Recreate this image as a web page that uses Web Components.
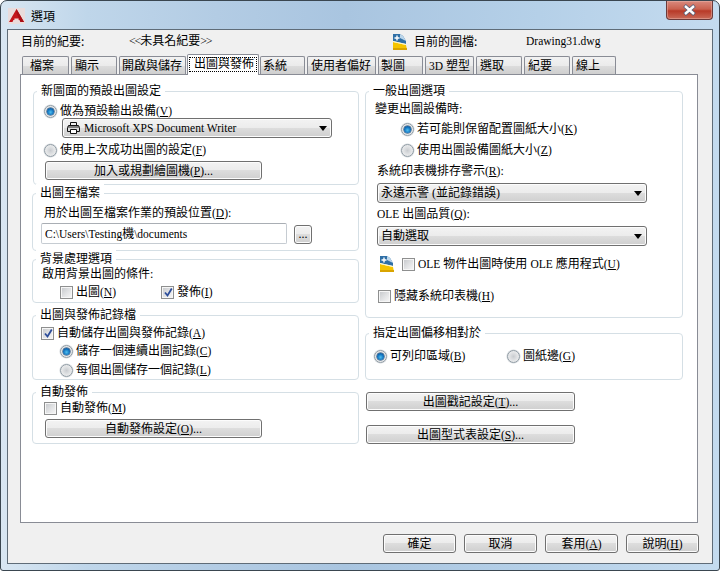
<!DOCTYPE html>
<html lang="zh-Hant"><head><meta charset="utf-8"><title>選項</title>
<style>
html,body{margin:0;padding:0;background:#fff}
body{font:12px/14px "Liberation Serif","Noto Sans CJK TC",serif;color:#000;width:720px;height:571px;overflow:hidden}
</style></head><body>
<x-dialog>
  <span slot="title">選項</span>
  <x-info slot="info"></x-info>
  <x-tab style="width:47px;margin-left:2px" pad="7">檔案</x-tab>
  <x-tab style="width:46px;margin-left:2px" pad="3">顯示</x-tab>
  <x-tab style="width:67px;margin-left:2px" pad="2">開啟與儲存</x-tab>
  <x-tab style="width:72px;margin-left:1px" pad="5" active>出圖與發佈</x-tab>
  <x-tab style="width:45px;margin-left:1px" pad="2">系統</x-tab>
  <x-tab style="width:69px;margin-left:2px" pad="3">使用者偏好</x-tab>
  <x-tab style="width:45px;margin-left:2px" pad="2">製圖</x-tab>
  <x-tab style="width:49px;margin-left:2px" pad="3"><x-l>3D</x-l> 塑型</x-tab>
  <x-tab style="width:46px;margin-left:2px" pad="3">選取</x-tab>
  <x-tab style="width:46px;margin-left:2px" pad="3">紀要</x-tab>
  <x-tab style="width:44px;margin-left:2px" pad="3">線上</x-tab>

  <x-col slot="left" style="width:327px;margin-left:11px;gap:8px">
    <x-group label="新圖面的預設出圖設定" style="height:94px;margin-left:1px">
      <x-row style="margin:12px 0 0 10px"><x-radio checked></x-radio>做為預設輸出設備<x-m>V</x-m></x-row>
      <x-row style="margin-left:28px"><x-select style="width:270px" printer><x-l>Microsoft XPS Document Writer</x-l></x-select></x-row>
      <x-row style="margin:5px 0 0 10px"><x-radio></x-radio>使用上次成功出圖的設定<x-m>F</x-m></x-row>
      <x-row style="margin:4px 0 0 11px"><x-btn style="width:217px">加入或規劃繪圖機<x-m>P</x-m>...</x-btn></x-row>
    </x-group>
    <x-group label="出圖至檔案" style="height:58px">
      <x-row style="margin:12px 0 0 11px">用於出圖至檔案作業的預設位置<x-m>D</x-m>:</x-row>
      <x-row style="margin:3px 0 0 8px"><x-field style="width:246px"><x-l>C:\Users\Testing</x-l>機<x-l>\documents</x-l></x-field><x-btn style="width:18px;margin:1px 0 0 7px">...</x-btn></x-row>
    </x-group>
    <x-group label="背景處理選項" style="height:44px;margin-bottom:4px">
      <x-row style="margin:7px 0 0 9px">啟用背景出圖的條件:</x-row>
      <x-row style="margin:4px 0 0 27px"><x-check style="--w:101px">出圖<x-m>N</x-m></x-check><x-check checked>發佈<x-m>I</x-m></x-check></x-row>
    </x-group>
    <x-group label="出圖與發佈記錄檔" style="height:65px;margin-bottom:4px">
      <x-row style="margin:10px 0 0 8px"><x-check checked>自動儲存出圖與發佈記錄<x-m>A</x-m></x-check></x-row>
      <x-row style="margin:4px 0 0 27px"><x-radio checked></x-radio>儲存一個連續出圖記錄<x-m>C</x-m></x-row>
      <x-row style="margin:5px 0 0 27px"><x-radio></x-radio>每個出圖儲存一個記錄<x-m>L</x-m></x-row>
    </x-group>
    <x-group label="自動發佈" style="height:52px">
      <x-row style="margin:8px 0 0 11px"><x-check>自動發佈<x-m>M</x-m></x-check></x-row>
      <x-row style="margin:4px 0 0 12px"><x-btn style="width:217px">自動發佈設定<x-m>O</x-m>...</x-btn></x-row>
    </x-group>
  </x-col>

  <x-col slot="right" style="width:318px;margin-left:6px">
    <x-group label="一般出圖選項" style="height:227px">
      <x-row style="margin:10px 0 0 9px">變更出圖設備時:</x-row>
      <x-row style="margin:6px 0 0 35px"><x-radio checked></x-radio>若可能則保留配置圖紙大小<x-m>K</x-m></x-row>
      <x-row style="margin:7px 0 0 35px"><x-radio></x-radio>使用出圖設備圖紙大小<x-m>Z</x-m></x-row>
      <x-row style="margin:7px 0 0 11px">系統印表機排存警示<x-m>R</x-m>:</x-row>
      <x-row style="margin:5px 0 0 11px"><x-select style="width:270px">永遠示警 (並記錄錯誤)</x-select></x-row>
      <x-row style="margin:4px 0 0 11px"><x-l>OLE</x-l>&nbsp;出圖品質<x-m>Q</x-m>:</x-row>
      <x-row style="margin:5px 0 0 11px"><x-select style="width:270px">自動選取</x-select></x-row>
      <x-row style="margin:9px 0 0 13px;height:18px"><x-dwg style="margin-right:7px"></x-dwg><x-check><x-l>OLE</x-l>&nbsp;物件出圖時使用&nbsp;<x-l>OLE</x-l>&nbsp;應用程式<x-m>U</x-m></x-check></x-row>
      <x-row style="margin:16px 0 0 12px"><x-check>隱藏系統印表機<x-m>H</x-m></x-check></x-row>
    </x-group>
    <x-group label="指定出圖偏移相對於" style="height:47px;margin-top:15px">
      <x-row style="margin:15px 0 0 8px"><x-radio checked style="--w:133px">可列印區域<x-m>B</x-m></x-radio><x-radio>圖紙邊<x-m>G</x-m></x-radio></x-row>
    </x-group>
    <x-btn style="width:209px;margin:12px 0 0 1px">出圖戳記設定<x-m>T</x-m>...</x-btn>
    <x-btn style="width:209px;margin:14px 0 0 1px">出圖型式表設定<x-m>S</x-m>...</x-btn>
  </x-col>

  <x-btn slot="foot" style="width:73px">確定</x-btn>
  <x-btn slot="foot" style="width:73px">取消</x-btn>
  <x-btn slot="foot" style="width:73px">套用<x-m>A</x-m></x-btn>
  <x-btn slot="foot" style="width:73px">說明<x-m>H</x-m></x-btn>
</x-dialog>
<script>
function def(name, html, init){
  customElements.define(name, class extends HTMLElement{
    connectedCallback(){
      if(this.shadowRoot) return;
      const s=this.attachShadow({mode:'open'});
      s.innerHTML=typeof html==='function'?html(this):html;
      if(init) init(this,s);
    }
  });
}
const DWG=`<svg width="16" height="18" viewBox="0 0 16 18" style="display:block">
<path d="M1 1h7l3 2 3 5v3L1 8z" fill="#2f6fa6"/><path d="M8 1l3 2 3 5-6-3z" fill="#bcd6ea"/>
<path d="M1 9l13 3 1 5H1z" fill="#f5c400"/><path d="M1 8l13 3v1L1 9z" fill="#fff6c0"/><path d="M1 15h14v2H1z" fill="#d9a400"/>
<path d="M5 2.5v5M2.5 5h5" stroke="#fff" stroke-width="1.4"/></svg>`;

def('x-dialog',`<style>
:host{display:flex;flex-direction:column;box-sizing:border-box;width:720px;height:571px;border:1px solid #3a4650;border-radius:7px 7px 3px 3px;
background:linear-gradient(90deg,#d8e6f2 0,#bfd6ea 12%,#b3cce4 30%,#a9c5e0 48%,#b5d0e8 75%,#c4dbef 100%);overflow:hidden}
.bar{display:flex;align-items:flex-start;height:28px;flex:none}
.logo{margin:7px 0 0 7px}
.t{margin:7px 0 0 6px;line-height:16px;font-family:"Noto Sans CJK TC",sans-serif}
.close{margin-left:auto;margin-right:6px;width:47px;height:19px;box-sizing:border-box;border:1px solid #6b3a3a;border-top:0;border-radius:0 0 4px 4px;
background:linear-gradient(#d98a7e 0,#c9614f 45%,#b83a28 55%,#c96a58 100%);display:flex;align-items:center;justify-content:center;box-shadow:inset 0 0 0 1px #e8b5ac80}
.client{flex:1;margin:0 6px 6px;border:1px solid #5f6c78;background:#f0f0f0;display:flex;flex-direction:column;min-height:0}
.info{height:24px;flex:none}
.tabs{display:flex;align-items:flex-end;height:20px;margin-left:12px;position:relative;z-index:1;flex:none}
.panel{margin:0 14px 0 12px;height:449px;box-sizing:border-box;border:1px solid #898c95;background:#fff;display:flex;padding-top:16px;align-items:flex-start;flex:none}
.foot{display:flex;justify-content:flex-end;gap:8px;margin:11px 13px 0 0}
</style>
<div class="bar">
<svg class="logo" width="17" height="16" viewBox="0 0 17 16"><rect width="17" height="16" fill="#e9dcdc"/><path d="M8.5 1L16 14H12.5L11.6 12H5.4L4.5 14H1z" fill="#c4161c"/><path d="M8.5 1L16 14H12.5L8.5 5z" fill="#a80f16"/><path d="M6.4 10.5h4.2v2H6.4z" fill="#f3d6d6"/></svg>
<span class="t"><slot name="title"></slot></span>
<div class="close"><svg width="15" height="12" viewBox="0 0 15 12"><path d="M2.5 1.5l10 9M12.5 1.5l-10 9" fill="none" stroke="#56607a" stroke-width="4"/><path d="M3 2l9 8M12 2l-9 8" fill="none" stroke="#fff" stroke-width="2.4"/></svg></div>
</div>
<div class="client">
<div class="info"><slot name="info"></slot></div>
<div class="tabs"><slot></slot></div>
<div class="panel"><slot name="left"></slot><slot name="right"></slot></div>
<div class="foot"><slot name="foot"></slot></div>
</div>`);

def('x-info',`<style>
:host{display:flex;align-items:flex-start;height:24px}
span{font-family:"Noto Sans CJK TC",sans-serif}
.a{margin:4px 0 0 13px;width:108px}.b{margin:4px 0 0 0;width:263px}.c{margin:4px 0 0 6px;width:112px}.d{margin-top:4px;font:11.5px/14px "Liberation Serif",serif}
svg{margin-top:3px}
.b{font-family:"Liberation Serif","Noto Sans CJK TC",serif}
.b i{font-style:normal;letter-spacing:-1.2px}
</style><span class="a">目前的紀要:</span><span class="b"><i>&lt;&lt;</i>未具名紀要<i>&gt;&gt;</i></span>${DWG}<span class="c">目前的圖檔:</span><span class="d">Drawing31.dwg</span>`);

def('x-tab',h=>{const a=h.hasAttribute('active');return `<style>
:host{display:block;box-sizing:border-box;height:${a?21:18}px;${a?'margin-bottom:-1px;':''}border:1px solid #898c95;border-bottom:0;
background:${a?'#fff':'linear-gradient(#f2f2f2 0,#ebebeb 50%,#dddddd 50%,#cfcfcf 100%)'};font-family:"Liberation Serif","Noto Sans CJK TC",serif;white-space:nowrap;position:relative;border-radius:2px 2px 0 0}
.i{display:block;margin:${a?'2px 1px 0':'2px 0 0'};padding-left:${h.getAttribute('pad')}px;line-height:15px;${a?'outline:1px dotted #000;outline-offset:-1px;height:15px;':''}}
</style><span class="i"><slot></slot></span>`});

def('x-col',`<style>:host{display:flex;flex-direction:column;flex:none}</style><slot></slot>`);

def('x-group',h=>`<style>
:host{display:flex;flex-direction:column;box-sizing:border-box;border:1px solid #d5dfe5;border-radius:4px;position:relative;background:#fff;flex:none}
.l{position:absolute;left:3px;top:-10px;padding:0 4px;background:#fff;line-height:16px;white-space:nowrap;font-family:"Noto Sans CJK TC",sans-serif}
</style><span class="l">${h.getAttribute('label')}</span><slot></slot>`);

def('x-row',`<style>:host{display:flex;align-items:center;min-height:14px;white-space:nowrap;flex:none}</style><slot></slot>`);

def('x-btn',`<style>
:host{display:inline-flex;align-items:center;justify-content:center;box-sizing:border-box;height:19px;border:1px solid #707070;border-radius:3px;
background:linear-gradient(#f3f3f3 0,#ececec 48%,#dddddd 50%,#cfcfcf 100%);box-shadow:inset 0 0 0 1px #fcfcfc;white-space:nowrap;flex:none}
</style><slot></slot>`);

def('x-select',h=>`<style>
:host{display:inline-flex;align-items:center;box-sizing:border-box;height:20px;border:1px solid #707070;border-radius:3px;padding-left:3px;position:relative;
background:linear-gradient(#f3f3f3 0,#ececec 48%,#dddddd 50%,#cfcfcf 100%);box-shadow:inset 0 0 0 1px #fcfcfc;white-space:nowrap;flex:none}
.p{margin:0 4px 0 1px;display:block}
.a{position:absolute;right:3px;top:6px;width:0;height:0;border:4px solid transparent;border-top:5px solid #000;border-bottom:0;margin-top:1px;margin-right:1px}
</style>${h.hasAttribute('printer')?`<svg class="p" width="13" height="12" viewBox="0 0 13 12"><path d="M3.5 3.5V.5h6v3M3.5 9.5h-3v-4l1-2h10l1 2v4h-3" fill="none" stroke="#111"/><path d="M3.5 7.5h6v4h-6z" fill="#fff" stroke="#111"/><path d="M1 5h11" stroke="#111"/></svg>`:''}<slot></slot><span class="a"></span>`);

def('x-radio',h=>{const c=h.hasAttribute('checked');return `<style>
:host{display:inline-flex;align-items:center;flex:none;width:var(--w,auto)}
.o{width:13px;height:13px;margin-right:3px;box-sizing:border-box;border:1px solid #8e9aa3;border-radius:50%;flex:none;display:flex;align-items:center;justify-content:center;
background:radial-gradient(circle at 50% 50%,#c9ccd0 0,#dfe1e3 45%,#f7f7f7 100%);box-shadow:0 0 0 .5px #d4d8dc}
.d{width:7px;height:7px;border-radius:50%;background:radial-gradient(circle at 50% 60%,#4fc0f0 0,#1070bc 55%,#0c3f78 100%);box-shadow:0 0 0 .5px #0f3e6d}
</style><span class="o">${c?'<span class="d"></span>':''}</span><slot></slot>`});

def('x-check',h=>{const c=h.hasAttribute('checked');return `<style>
:host{display:inline-flex;align-items:center;flex:none;width:var(--w,auto)}
.o{width:13px;height:13px;margin-right:3px;box-sizing:border-box;border:1px solid #8e8f8f;flex:none;position:relative;background:#f6f6f6}
.o::before{content:"";position:absolute;inset:1px;background:linear-gradient(135deg,#c9cbce 0,#e2e3e5 55%,#f4f4f4 100%)}
svg{position:absolute;left:1px;top:0}
</style><span class="o">${c?'<svg width="11" height="11" viewBox="0 0 11 11"><path d="M2 5.5l2.5 3L8.8 1.5" fill="none" stroke="#2c4d9a" stroke-width="1.8"/></svg>':''}</span><slot></slot>`});

def('x-field',`<style>
:host{display:inline-flex;align-items:center;box-sizing:border-box;height:21px;border:1px solid #c6ccd2;border-top-color:#a9aeb4;border-radius:2px;padding-left:3px;background:#fff;flex:none;white-space:nowrap}
</style><slot></slot>`);

def('x-m',`<style>:host{display:inline;font:11.5px/14px "Liberation Serif",serif}</style>(<u><slot></slot></u>)`);
def('x-l',`<style>:host{display:inline;font:11.5px/14px "Liberation Serif",serif}</style><slot></slot>`);
def('x-dwg',`<style>:host{display:block;flex:none;width:16px;height:18px}</style>${DWG}`);
</script>
</body></html>
